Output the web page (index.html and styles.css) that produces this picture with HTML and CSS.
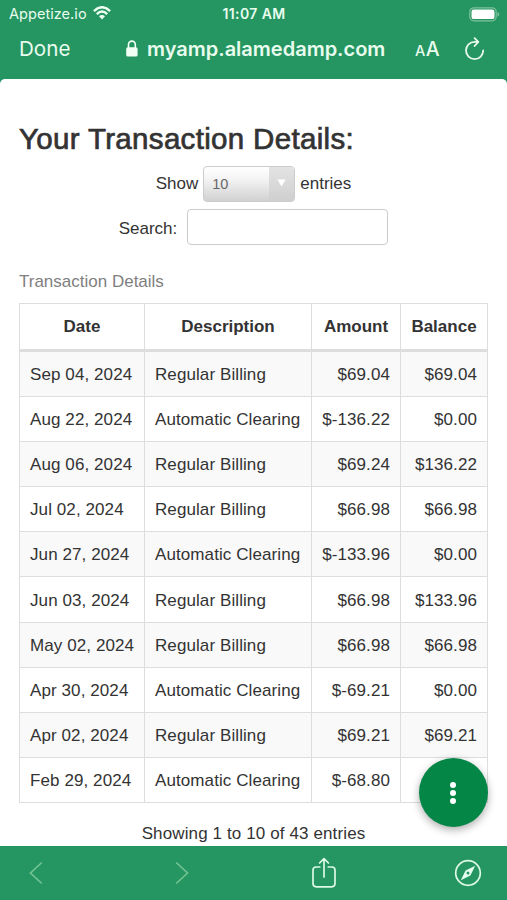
FILE: index.html
```
<!DOCTYPE html>
<html lang="en">
<head>
<meta charset="utf-8">
<title>Your Transaction Details</title>
<link rel="stylesheet" href="styles.css">
</head>
<body>
<div class="screen">
  <header class="browser-top">
    <div class="status">
      <div class="carrier"><span>Appetize.io</span>
        <svg width="18" height="14" viewBox="0 0 18 14" fill="none" stroke="#eefff2" stroke-width="2.4"><path d="M.9 5.1Q9-2.7 17.1 5.1M3.8 8.1Q9 3.1 14.2 8.1"/><path d="M6 10.2Q9 7.6 12 10.2L9 13.4Z" fill="#eefff2" stroke="none"/></svg>
      </div>
      <span class="clock">11:07 AM</span>
      <svg class="battery" width="31" height="15" viewBox="0 0 31 15"><rect x=".8" y=".8" width="26.4" height="13" rx="4" fill="none" stroke="#7fc29c" stroke-width="1.2"/><rect x="2.5" y="2.5" width="23" height="9.6" rx="2.2" fill="#fff"/><path d="M28.5 5v4.6q1.7-.6 1.7-2.3T28.5 5Z" fill="#7fc29c"/></svg>
    </div>
    <div class="address">
      <span class="done">Done</span>
      <svg class="lock" width="12" height="17" viewBox="0 0 12 17"><rect x=".2" y="7.2" width="11.4" height="9.4" rx="1.7" fill="#f2fff5"/><path d="M2.5 8V4.5a3.4 3.4 0 0 1 6.8 0V8" fill="none" stroke="#f2fff5" stroke-width="1.6"/></svg>
      <strong class="host">myamp.alamedamp.com</strong>
      <span class="text-size"><small>A</small>A</span>
      <svg class="reload" width="22" height="24" viewBox="0 0 22 24" fill="none" stroke="#e6fbec" stroke-width="1.8" stroke-linecap="round" stroke-linejoin="round"><path d="M19.2 13.4A8.6 8.6 0 1 1 10.6 4.9H14.300M10.600 1.200l3.700 3.700-3.700 4.100"/></svg>
    </div>
  </header>

  <main class="page">
    <h1>Your Transaction Details:</h1>
    <div class="length"><span>Show</span>
      <div class="select"><span>10</span><i><svg width="9" height="8" viewBox="0 0 9 8"><path d="M.4.4h8.2L4.5 7.6Z" fill="#fff"/></svg></i></div>
      <span>entries</span></div>
    <label class="search"><span>Search:</span><input type="text"></label>
    <table>
      <caption>Transaction Details</caption>
      <colgroup><col class="c-date"><col class="c-desc"><col class="c-amount"><col class="c-balance"></colgroup>
      <thead><tr><th>Date</th><th>Description</th><th>Amount</th><th>Balance</th></tr></thead>
      <tbody>
        <tr><td>Sep 04, 2024</td><td>Regular Billing</td><td>$69.04</td><td>$69.04</td></tr>
        <tr><td>Aug 22, 2024</td><td>Automatic Clearing</td><td>$-136.22</td><td>$0.00</td></tr>
        <tr><td>Aug 06, 2024</td><td>Regular Billing</td><td>$69.24</td><td>$136.22</td></tr>
        <tr><td>Jul 02, 2024</td><td>Regular Billing</td><td>$66.98</td><td>$66.98</td></tr>
        <tr><td>Jun 27, 2024</td><td>Automatic Clearing</td><td>$-133.96</td><td>$0.00</td></tr>
        <tr><td>Jun 03, 2024</td><td>Regular Billing</td><td>$66.98</td><td>$133.96</td></tr>
        <tr><td>May 02, 2024</td><td>Regular Billing</td><td>$66.98</td><td>$66.98</td></tr>
        <tr><td>Apr 30, 2024</td><td>Automatic Clearing</td><td>$-69.21</td><td>$0.00</td></tr>
        <tr><td>Apr 02, 2024</td><td>Regular Billing</td><td>$69.21</td><td>$69.21</td></tr>
        <tr><td>Feb 29, 2024</td><td>Automatic Clearing</td><td>$-68.80</td><td></td></tr>
      </tbody>
    </table>
    <p class="info">Showing 1 to 10 of 43 entries</p>
    <button class="fab" aria-label="Menu"><svg width="8" height="24" viewBox="0 0 8 24" fill="#fff"><circle cx="4" cy="4" r="3"/><circle cx="4" cy="12" r="3"/><circle cx="4" cy="20" r="3"/></svg></button>
  </main>

  <nav class="browser-bottom">
    <svg width="14" height="24" viewBox="0 0 14 24" fill="none" stroke="#71c391" stroke-width="1.7"><path d="M12.8 1.5 1.5 12l11.3 10.5"/></svg>
    <svg width="14" height="24" viewBox="0 0 14 24" fill="none" stroke="#71c391" stroke-width="1.7"><path d="M1.2 1.5 12.5 12 1.2 22.5"/></svg>
    <svg width="26" height="32" viewBox="0 0 26 32" fill="none" stroke="#dcfae5" stroke-width="1.7" stroke-linecap="round" stroke-linejoin="round"><path d="M8.8 10H5.2Q2 10 2 13.2v13.4q0 3.2 3.2 3.2h15.6q3.2 0 3.2-3.2V13.2Q24 10 20.8 10h-3.6M13 20V2M8.6 6 13 1.6 17.4 6"/></svg>
    <svg width="28" height="28" viewBox="0 0 28 28"><circle cx="14" cy="14" r="12.3" fill="none" stroke="#dcfae5" stroke-width="1.7"/><path d="M21.2 6.8 16.4 16.4 6.8 21.2 11.6 11.6Z" fill="#e6fff0"/><circle cx="14" cy="14" r="1.5" fill="#259562"/></svg>
  </nav>
</div>
</body>
</html>
```
FILE: styles.css
```
* { box-sizing: border-box; }
body { margin: 0; background: #259562; }
.screen {
  width: 507px; height: 900px; overflow: hidden;
  display: flex; flex-direction: column;
  font: 17px/25px "Liberation Sans", Arial, sans-serif;
  color: #333;
}
.browser-top {
  height: 79px; flex: none; background: #259562; color: #e8fcee;
  font-family: Inter, sans-serif;
}
.status {
  height: 28px; padding: 0 7px 0 9px;
  display: grid; grid-template-columns: 1fr auto 1fr; align-items: center;
  font-size: 14.5px; line-height: 28px;
}
.carrier { display: flex; align-items: center; gap: 6px; }
.carrier span { letter-spacing: .05px; }
.carrier svg { margin-top: -2px; }
.clock { font-weight: 600; font-size: 14px; letter-spacing: .4px; margin-right: 1px; }
.battery { justify-self: end; }
.address { height: 42px; display: flex; align-items: center; padding-left: 19px; }
.done { width: 107px; font-size: 20.6px; margin-top: -1px; }
.lock { margin-top: -1px; }
.host { width: 268px; margin-left: 9px; font-size: 20px; font-weight: 600; white-space: nowrap; }
.text-size { width: 49px; margin-top: 2px; font-size: 19.5px; font-weight: 500; white-space: nowrap; }
.text-size small { font-size: 14.5px; margin-right: .5px; }
.reload { flex: none; }
.page {
  flex: 1; min-height: 0; position: relative; background: #fff;
  padding: 41px 19px 0; border-radius: 5px 5px 0 0;
}
h1 { margin: 0; font-size: 29.5px; line-height: 38px; font-weight: 400; letter-spacing: .33px; -webkit-text-stroke: .7px #333; white-space: nowrap; }
.length { margin-top: 8px; display: flex; justify-content: center; align-items: center; gap: 5px; height: 36px; }
.length > span { margin-top: -1px; }
.select {
  width: 92px; height: 36px; border: 1px solid #ccc; border-radius: 4px; overflow: hidden;
  background: linear-gradient(#fff, #f4f4f4 35%, #d1d1d1);
  display: flex; justify-content: space-between; align-items: center;
  padding-left: 8px; font-size: 14.5px; color: #666;
}
.select i { width: 25px; height: 100%; background: linear-gradient(#e3e3e3, #cfcfcf); display: flex; align-items: center; justify-content: center; padding-bottom: 2px; }
.search { margin-top: 7px; display: flex; justify-content: center; align-items: center; gap: 10px; height: 36px; }
.search span { margin-top: 3px; }
.search input { width: 201px; height: 36px; margin: 0; border: 1px solid #ccc; border-radius: 4px; background: #fff; }
table { width: 469px; margin-top: 11px; table-layout: fixed; border-collapse: separate; border-spacing: 0; border: solid #ddd; border-width: 1px 0 0 1px; }
caption { text-align: left; color: #808080; height: 47px; line-height: 25px; padding-top: 13px; font-size: 17px; }
.c-date { width: 125px; }
.c-desc { width: 167px; }
.c-amount { width: 89px; }
.c-balance { width: 87px; }
th, td { padding: 0 10px; border: solid #ddd; border-width: 0 1px 1px 0; white-space: nowrap; }
th { height: 47.5px; text-align: center; border-bottom-width: 3px; }
td { height: 45.2px; padding-top: 1px; letter-spacing: .09px; }
td:nth-child(n+3) { text-align: right; }
tbody tr:nth-child(odd) { background: #f9f9f9; }
.info { margin: 18px 0 0; text-align: center; letter-spacing: .12px; }
.fab {
  position: absolute; right: 19px; bottom: 19px; width: 69px; height: 69px;
  border: 0; border-radius: 50%; padding: 0 1px 0 0; background: #048647;
  box-shadow: 0 3px 9px rgba(0,0,0,.32);
  display: flex; align-items: center; justify-content: center;
}
.browser-bottom {
  height: 54px; flex: none; background: #259562; padding-left: 29px;
  display: grid; grid-template-columns: 146px 136px 143px 28px; align-items: center;
}
```
